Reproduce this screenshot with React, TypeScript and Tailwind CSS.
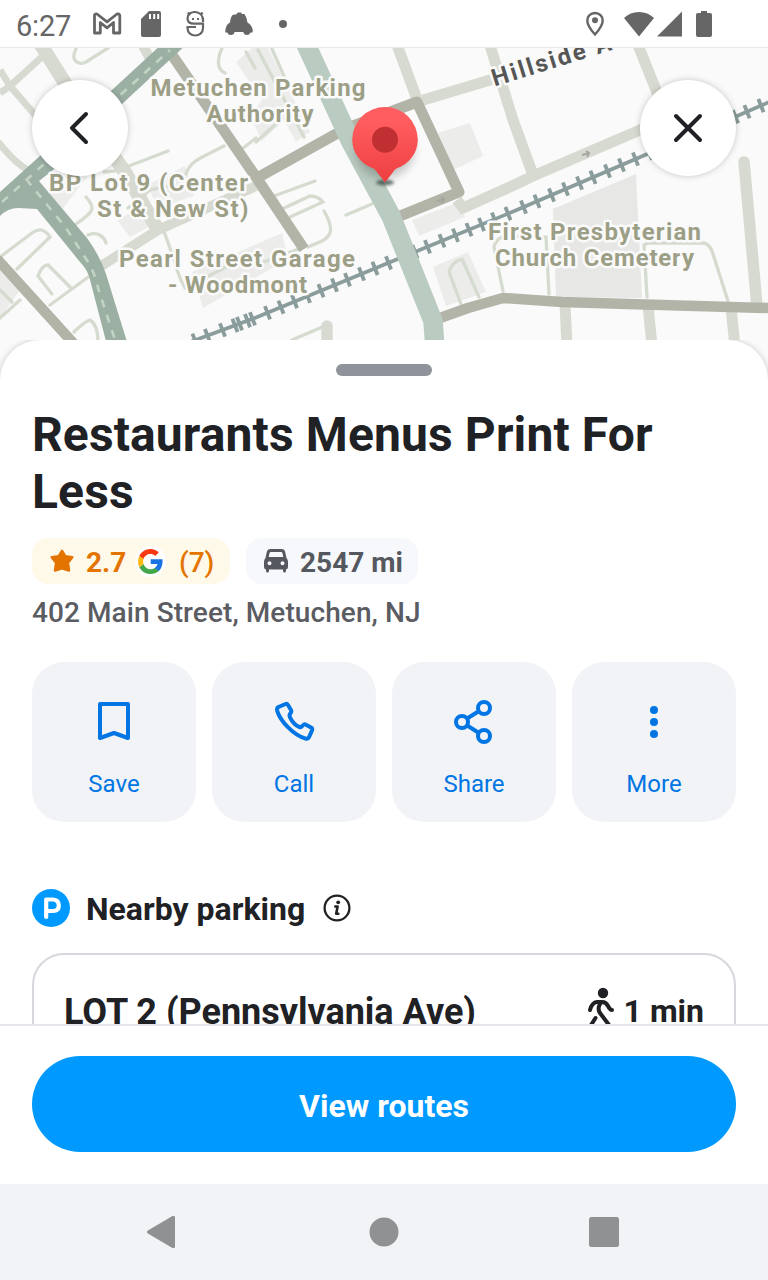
import React from "react";

const RAIL: [number, number][] = [
  [180, 347], [193, 341], [256, 317.5], [399, 258.5], [416, 251.5], [512, 212], [645, 155], [736, 116.5], [790, 93],
];

function railY(x: number) {
  for (let i = 1; i < RAIL.length; i++) {
    const [x1, y1] = RAIL[i];
    const [x0, y0] = RAIL[i - 1];
    if (x <= x1) return y0 + ((y1 - y0) * (x - x0)) / (x1 - x0);
  }
  return 100;
}

const TIES = [
  195, 207.5, 222.5, 235, 239.5, 247.5, 252.5, 267.5, 281, 294.5, 307.5, 321, 334.5, 347.5, 361.5, 375, 388.5, 415,
  427.5, 442, 455.5, 469, 481.5, 494.5, 508, 523.5, 537, 551.5, 565.5, 579.5, 593, 607.5, 621.5, 635.5, 649.5, 735.5,
  747, 761,
];

function Label({ x, y, w, children }: { x: number; y: number; w: number; children: string }) {
  return (
    <text x={x} y={y} textLength={w} lengthAdjust="spacing">
      {children}
    </text>
  );
}

function CityMap() {
  return (
    <svg className="block h-[300px] w-[768px]" viewBox="0 48 768 300" fill="none">
      <rect x="0" y="48" width="768" height="300" fill="#fafafa" />
      <g fill="#ececeb">
        <path fill="#e7e7e5" d="M553 209L636 174L642 298L556 297Z" />
        <path d="M438 133L470 123L483 156L453 170ZM412 220L459 202L465 217L419 236ZM433 267L468 252L486 292L446 306Z" />
        <path d="M117 220L147 204L158 222L130 237ZM50 180L88 176L60 212L48 200ZM147 185L185 166L194 196L158 208Z" />
        <path d="M192 272L282 233L288 259L203 308ZM0 270L20 290L0 318ZM236 62L252 48L268 48L310 132L296 142L284 120L262 141L250 115L262 100Z" />
      </g>
      <g stroke="#d5dbcf" strokeWidth="3.3" strokeLinecap="round">
        <path d="M76 49C70 60 78 66 86 62L108 48M222 48C216 62 218 70 225 73M246 52L255 68M258 50L304 137M272 49L284 76" />
        <path d="M0 257L32 233Q42 225 50 237L17 269M50 305L76 286L110 261M52 294L38 276Q42 265 48 265L70 287M74 332Q84 322 90 320Q98 325 98 342" />
        <path d="M76 224C94 212 96 208 86 197M88 235C98 231 104 237 106 243M104 172L116 171L168 151M186 174C190 162 196 160 224 146M242 149L256 138" />
        <path d="M164 232C172 250 178 278 184 286M185 288L232 264M128 208L150 190L170 186M274 196L315 181M282 209L310 196Q318 196 323 202L290 217M324 211C334 228 332 236 322 241L308 247M264 262L304 247M346 215L372 204" />
        <path d="M461 304L449 272Q452 262 462 259L479 297M503 291L494 247Q496 239 504 236L546 237L549 294M647 297L644 245L648 243L704 243Q710 244 713 254L728 301M292 340L327 325M0 290L12 302M0 318L20 300M256 142L276 124" />
      </g>
      <g stroke="#d7dad1">
        <path strokeWidth="14" d="M38 40L88 120L125 172L158 230" />
        <path strokeWidth="10" d="M98 268L158 230L256 186M143 46L152 62" />
        <path strokeWidth="7" d="M0 93L10 86L45 54M0 70L10 86L36 116M-2 142Q16 164 28 170" />
        <path strokeWidth="11" d="M396 42L418 102M420 101L500 77M489 42L513 120L533 175M457 200L463 208L512 186L533 176L640 130L664 118M636 40L668 120M565 304L567 346M648 305L652 346M731 308L735 346" />
        <path strokeWidth="11.5" strokeLinecap="round" d="M744 162L757 306M327 326V346" />
      </g>
      <g stroke="#b2b4a8" strokeWidth="11" strokeLinejoin="round">
        <path d="M170 52L258 180L304 249M257 178L345 129L417 102L459 192L400 216" />
        <path strokeWidth="10.500" d="M-3 259L75 345M440 318L468 308L503 298L562 302L645 304.500L768 308" />
      </g>
      <path stroke="#8a9c9b" strokeWidth="3.6" d={"M" + RAIL.map((p) => p.join(" ")).join("L")} />
      <path
        stroke="#8a9c9b"
        strokeWidth="3.8"
        d={TIES.map((x) => `M${x - 2.6} ${railY(x) - 6.6}L${x + 2.6} ${railY(x) + 6.6}`).join("")}
      />
      <path stroke="#bacbc1" strokeWidth="19.5" strokeLinejoin="round" d="M304 40L350 140L391 216L433 321L435 348" />
      <path
        fill="#9bafa3"
        d="M163 43L112 90L41 155L0 192V216Q8 208 18 208L37 209L80 262Q86 268 89 276L107 345H128L106 274Q100 256 87 238L39 181L53 170L122 104L189 42Z"
      />
      <path stroke="#c3d3c5" strokeWidth="2.600" strokeDasharray="8 8" d="M2 202L44 164L170 50M26 179L66 228L88 262Q96 276 98 288L117 346" />
      <path stroke="#a5a79f" strokeWidth="2" d="M437 201L444 199M441 197L444 199L442 203M582 155L589 153M586 151L589 153L587 157" />
      <g
        className="font-['Roboto',sans-serif] text-[24px] font-bold"
        fill="#9c9f86"
        stroke="#fafafa"
        strokeWidth="5"
        strokeLinejoin="round"
        paintOrder="stroke"
      >
        <Label x={150.5} y={96} w={215}>Metuchen Parking</Label>
        <Label x={206.5} y={122} w={107}>Authority</Label>
        <Label x={49} y={191} w={199}>BP Lot 9 (Center</Label>
        <Label x={97} y={217} w={151.5}>St &amp; New St)</Label>
        <Label x={119} y={267} w={236}>Pearl Street Garage</Label>
        <Label x={168} y={293} w={139}>- Woodmont</Label>
        <Label x={488} y={240} w={213}>First Presbyterian</Label>
        <Label x={495} y={266} w={199}>Church Cemetery</Label>
        <text x="0" y="0" fill="#555655" transform="translate(494.500 86.500) rotate(-17.300)" textLength="124">
          Hillside A
        </text>
      </g>
    </svg>
  );
}

function Pin() {
  return (
    <svg className="absolute left-[338px] top-[50px] h-[96px] w-[96px]" viewBox="338 98 96 96">
      <defs>
        <linearGradient id="pinFill" x1="0" y1="0" x2="0" y2="1">
          <stop offset="0.2" stopColor="#ff5d5f" />
          <stop offset="1" stopColor="#ee3e40" />
        </linearGradient>
        <filter id="soft" x="-50%" y="-50%" width="200%" height="200%">
          <feGaussianBlur stdDeviation="5" />
        </filter>
        <filter id="tip" x="-50%" y="-100%" width="200%" height="300%">
          <feGaussianBlur stdDeviation="1.5" />
        </filter>
      </defs>
      <circle cx="385" cy="149" r="29" fill="#000" opacity="0.22" filter="url(#soft)" />
      <ellipse cx="385" cy="182.500" rx="9" ry="3" fill="#2d4038" opacity="0.7" filter="url(#tip)" />
      <path
        fill="url(#pinFill)"
        d="M385 107A32.800 32.800 0 0 1 417.800 139.800C417.800 153 409 164 396.500 168.500Q394.500 169.500 393.500 171.500L385 182.500L376.500 171.500Q375.500 169.500 373.500 168.500C361 164 352.200 153 352.200 139.800A32.800 32.800 0 0 1 385 107Z"
      />
      <circle cx="385" cy="139.700" r="13" fill="#c03032" />
    </svg>
  );
}

function StatusBar() {
  return (
    <div className="flex h-12 shrink-0 border-b border-[#e9e9e9] bg-white">
      <div className="w-[78px] pl-4 pt-2 text-[29px] leading-[36px] tracking-[-0.2px] text-[#666]">6:27</div>
      <svg className="h-[47px] w-[690px]" viewBox="78 0 690 47" fill="none">
        <path
          stroke="#666"
          strokeWidth="2.8"
          strokeLinejoin="round"
          d="M94.500 15.500Q94.500 13.500 97 14L107 21.800L117 14Q119.800 13.500 119.800 16V33H113.500V22.500L107 27.800L100.300 22.500V33H94.500Z"
        />
        <path fill="#666" d="M149 11h10q2 0 2 2v22q0 2-2 2h-16q-2 0-2-2V19z" />
        <path stroke="#fff" strokeWidth="2" d="M150 14v5M154.200 14v5M158.200 14v5" />
        <g stroke="#666" strokeWidth="2.200">
          <path d="M203 20.500C203 9.500 187.500 9.500 187.500 18.500Q187.500 23.700 194 23.700H203V28C203 38 187.500 38 187.500 28V26M187 27H196M203 18V22" />
          <path d="M188 12.500L190 15M202.500 12.500L200.500 15" strokeWidth="2.500" />
        </g>
        <path fill="#666" d="M192 18h2v2h-2zM197 18h2v2h-2z" />
        <path
          fill="#666"
          d="M234 14.500H236L238 12.500H241L242 14H244.500Q247 18 247.500 22.500Q252 25 252.800 30.500L252.500 32.500H250.500Q249.500 35 246.800 35Q244 35 243.300 32H234.500Q234 35 231 35Q228 35 227.300 32.500H225.300Q225 25 230 22.500Q230.500 18 232 15.500Z"
        />
        <circle cx="283" cy="24" r="4" fill="#666" />
        <path stroke="#666" strokeWidth="2.400" d="M595 13C590.500 13 587.300 16.300 587.300 20.500C587.300 26 595 34.500 595 34.500S602.700 26 602.700 20.500C602.700 16.300 599.500 13 595 13Z" />
        <circle cx="595" cy="20.300" r="3" fill="#666" />
        <path fill="#666" d="M639 36.500L624 18Q630 12 639 12T654 18ZM682 11.500V36.500H657ZM701 11h6v2h3q2 0 2 2v20q0 2-2 2h-12q-2 0-2-2V15q0-2 2-2h3z" />
      </svg>
    </div>
  );
}

function GoogleMark() {
  return (
    <div className="flex size-[31px] items-center justify-center rounded-full bg-white">
      <svg className="size-[25px]" viewBox="0 0 24 24">
        <path fill="#1a73e0" d="M23.500 9.800H12.200v4.700h6.500c-.6 2.200-1.500 3-2.800 3.900l3.800 3c2.600-2.300 4.200-6 3.800-11.600z" />
        <path fill="#43a84c" d="M12 24c3.200 0 5.900-1 7.900-2.800l-3.900-3c-3.500 2.300-9.100 1.200-10.700-3.900l-4 3.100C3.300 21.300 7.300 24 12 24z" />
        <path fill="#fdb913" d="M5.300 14.300c-.6-1.600-.5-3.100 0-4.600l-4-3.100c-1.700 3.400-1.700 7.400 0 10.800z" />
        <path fill="#fa3913" d="M12 4.800c1.800 0 3.300.6 4.600 1.800L20 3.200C14.400-2.200 4.900-.6 1.300 6.600l4 3.100C6.200 6.800 8.900 4.800 12 4.800z" />
      </svg>
    </div>
  );
}

function Action({ label, children }: { label: string; children: React.ReactNode }) {
  return (
    <button className="flex h-40 flex-1 flex-col items-center rounded-[32px] bg-[#f2f3f7] pt-9 text-[#0075e3]">
      <svg className="size-12" viewBox="0 0 48 48" fill="none" stroke="currentColor" strokeWidth="4" strokeLinejoin="round">
        {children}
      </svg>
      <span className="mt-[22px] text-[24px] leading-8">{label}</span>
    </button>
  );
}

export default function App() {
  return (
    <div className="flex h-[1280px] w-[768px] flex-col overflow-hidden bg-white font-['Roboto',sans-serif] text-[#202124]">
      <StatusBar />

      <div className="relative h-[292px] shrink-0">
        <CityMap />
        <Pin />
        <button className="absolute left-8 top-8 flex size-24 items-center justify-center rounded-full bg-white shadow-[0_0_6px_rgba(0,0,0,0.22)]">
          <svg className="size-12" viewBox="0 0 48 48" fill="none" stroke="#202124" strokeWidth="4" strokeLinecap="round" strokeLinejoin="round">
            <path d="M30 10L16 24L30 38" />
          </svg>
        </button>
        <button className="absolute right-8 top-8 flex size-24 items-center justify-center rounded-full bg-white shadow-[0_0_6px_rgba(0,0,0,0.22)]">
          <svg className="size-12" viewBox="0 0 48 48" fill="none" stroke="#202124" strokeWidth="4" strokeLinecap="round">
            <path d="M12 12L36 36M36 12L12 36" />
          </svg>
        </button>
      </div>

      <main className="relative flex h-[684px] shrink-0 flex-col overflow-hidden">
        <div className="absolute inset-x-0 top-0 h-10 bg-[#fafafa]" />
        <div className="relative flex flex-1 flex-col rounded-t-[40px] bg-white px-8 shadow-[0_0_6px_rgba(0,0,0,0.2)]">
          <div className="mt-6 h-3 w-24 shrink-0 self-center rounded-full bg-[#8f939b]" />
          <h1 className="mt-[30px] text-[48px] font-bold leading-[57px] tracking-[0.12px]">Restaurants Menus Print For Less</h1>

          <div className="mt-[18px] flex shrink-0 gap-4 text-[28px] font-bold leading-[46px]">
            <div className="flex h-[46px] w-[198px] items-center rounded-[16px] bg-[#fff9ea] pl-4 text-[#e37400]">
              <svg className="size-7" viewBox="0 0 28 28" fill="currentColor" stroke="currentColor" strokeWidth="2.500" strokeLinejoin="round">
                <path d="M14 3.800L17.400 9.300L24.300 10.200L19.900 15.800L21 23.500L14 21.300L7 23.500L8.100 15.800L3.700 10.200L10.600 9.300Z" />
              </svg>
              <span className="ml-[10px] mt-[4px] w-[49px]">2.7</span>
              <GoogleMark />
              <span className="ml-[13px] mt-[4px] font-medium">(7)</span>
            </div>
            <div className="flex h-[46px] w-[172px] items-center rounded-[16px] bg-[#f7f8fb] pl-4 text-[#55585e]">
              <svg className="size-7" viewBox="0 0 28 28">
                <path
                  fill="currentColor"
                  fillRule="evenodd"
                  d="M8.500 2H19.500Q22.500 2 23.200 5L24.500 11Q26 12.500 26 15V20Q26 22 24 22.500V24Q24 25.500 22.500 25.500T21 24V22.500H7V24Q7 25.500 5.500 25.500T4 24V22.500Q2 22 2 20V15Q2 12.500 3.500 11L4.800 5Q5.500 2 8.500 2ZM9 5Q7.800 5 7.500 6.200L6.700 10H21.300L20.500 6.200Q20.200 5 19 5ZM7.500 14.200a2 2 0 1 0 .01 0ZM20.500 14.200a2 2 0 1 0 .01 0Z"
                />
              </svg>
              <span className="ml-[10px] mt-[4px]">2547 mi</span>
            </div>
          </div>

          <p className="mt-[11px] text-[28px] font-medium leading-[36px] tracking-[0.08px] text-[#5a5c62]">402 Main Street, Metuchen, NJ</p>

          <div className="mt-[31px] flex shrink-0 gap-4">
            <Action label="Save">
              <path d="M10 6H38V40L24 35L10 40Z" />
            </Action>
            <Action label="Call">
              <path d="M8.500 9L15.500 6Q17 5.400 18 7L21 12Q21.900 13.700 20.500 15.200Q18.900 17 20 19.300C22.300 24 25.700 27.600 29.500 29Q31 29.500 32.300 28Q34 25.500 36 26.700L41 29.500Q42.700 30.600 42 32.500L39 39.200Q38 41.300 35.700 40.700C23.500 37 10.500 23.500 7.200 12.800Q6.500 10.200 8.500 9Z" />
            </Action>
            <Action label="Share">
              <path d="M17.200 20.500L28.200 13.500M17.200 27.500L28.200 34.500" />
              <circle cx="12" cy="24" r="6" />
              <circle cx="34" cy="10" r="6" />
              <circle cx="34" cy="38" r="6" />
            </Action>
            <Action label="More">
              <g fill="currentColor" stroke="none">
                <circle cx="24" cy="12" r="4" />
                <circle cx="24" cy="24" r="4" />
                <circle cx="24" cy="36" r="4" />
              </g>
            </Action>
          </div>

          <div className="mt-[67px] flex h-[38px] shrink-0 items-center">
            <svg className="size-[38px]" viewBox="0 0 38 38" fill="none">
              <circle cx="19" cy="19" r="19" fill="#0099ff" />
              <path stroke="#fff" strokeWidth="4.200" strokeLinecap="round" strokeLinejoin="round" d="M14.200 28V10.500H21Q26.800 11 26.800 16.500T21 22H14.500" />
            </svg>
            <h2 className="ml-4 mt-[1px] w-[219px] whitespace-nowrap text-[32px] font-bold leading-[38px]">Nearby parking</h2>
            <svg className="ml-[18px] size-7" viewBox="0 0 28 28" fill="none" stroke="#202124" strokeWidth="2.300">
              <circle cx="14" cy="14" r="12.400" />
              <circle cx="15.200" cy="8.300" r="1.900" fill="#202124" stroke="none" />
              <path strokeWidth="2.600" strokeLinecap="round" strokeLinejoin="round" d="M12.300 12.500H14.600L13.200 19.800H15.300" />
            </svg>
          </div>

          <div className="mt-[26px] flex h-[200px] shrink-0 items-start rounded-[32px] border-2 border-[#d6d7dc] px-[30px] pt-[34px]">
            <h3 className="whitespace-nowrap text-[36px] font-bold leading-[46px]">LOT 2 (Pennsylvania Ave)</h3>
            <svg className="ml-auto mt-[-3px] h-[48px] w-[28px] shrink-0" viewBox="587 986 28 48" fill="none" stroke="#202124" strokeWidth="4" strokeLinecap="round" strokeLinejoin="round">
              <circle cx="603" cy="993" r="5.200" fill="#202124" stroke="none" />
              <path d="M590 1010Q592 1002.500 597 1002H602Q606 1002 608 1006T612 1010M600.500 1003Q597 1009 600 1013L609 1025M595.500 1018L591 1025" />
            </svg>
            <span className="-mt-px ml-[9px] whitespace-nowrap text-[32px] font-bold leading-[46px]">1 min</span>
          </div>
        </div>
      </main>

      <footer className="relative flex h-40 shrink-0 flex-col border-t-2 border-[#e6e7ec] bg-white px-8 pt-[30px]">
        <button className="flex h-24 items-center justify-center rounded-full bg-[#0099ff] pt-1 text-[32px] font-bold text-white">View routes</button>
      </footer>

      <nav className="h-24 shrink-0 bg-[#f2f3f7]">
        <svg className="h-24 w-[768px]" viewBox="0 0 768 96" fill="#909193">
          <path d="M147.500 46.800L172 32.200Q175 31 175 33.500V62.500Q175 65 172 63.800L147.500 49.200Q146 48 147.500 46.800Z" />
          <circle cx="384" cy="48" r="14.500" />
          <rect x="589" y="33" width="30" height="30" rx="2.500" />
        </svg>
      </nav>
    </div>
  );
}
